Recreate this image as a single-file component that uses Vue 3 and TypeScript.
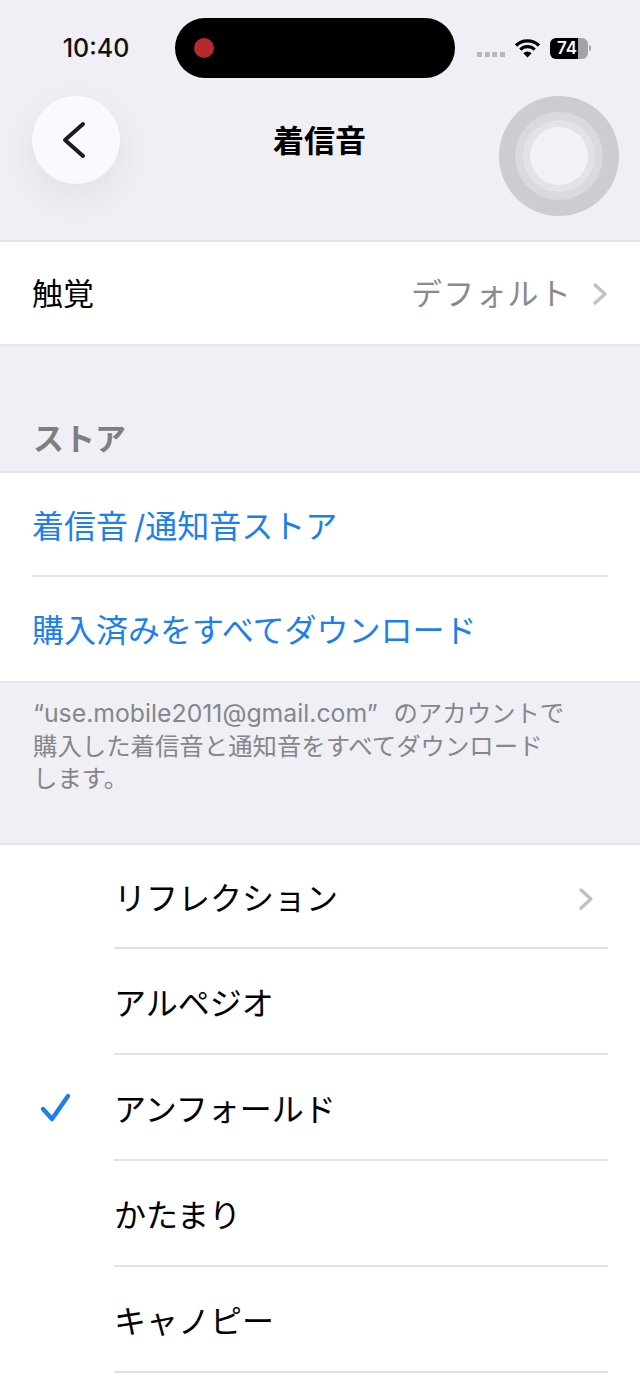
<script setup lang="ts">
const stores = ['着信音\u2009/通知音ストア', '購入済みをすべてダウンロード']

const tones = [
  { name: 'リフレクション', chevron: true, checked: false },
  { name: 'アルペジオ', chevron: false, checked: false },
  { name: 'アンフォールド', chevron: false, checked: true },
  { name: 'かたまり', chevron: false, checked: false },
  { name: 'キャノピー', chevron: false, checked: false },
]
</script>

<template>
  <div class="screen">
    <header class="top">
      <div class="status">
        <span class="time">10:40</span>
        <div class="island"><span class="rec"></span></div>
        <div class="indicators">
          <div class="dots"><i></i><i></i><i></i><i></i></div>
          <svg class="wifi" width="27" height="20" viewBox="0 0 27 20">
            <path d="M2 7.5a16.5 16.5 0 0 1 23 0M6.3 11.6a10.4 10.4 0 0 1 14.4 0" fill="none" stroke="#000" stroke-width="3.2" />
            <path d="M13.5 19.5 9.3 15.2a6 6 0 0 1 8.4 0z" fill="#000" />
          </svg>
          <div class="battery">
            <div class="battery-body"><span>74</span></div>
            <span class="battery-cap"></span>
          </div>
        </div>
      </div>
      <div class="nav">
        <button class="back">
          <svg width="26" height="38" viewBox="0 0 26 38">
            <path d="M22 3 4 19l18 16" fill="none" stroke="#1c1c1e" stroke-width="4" stroke-linecap="round" stroke-linejoin="round" />
          </svg>
        </button>
        <h1 class="title">着信音</h1>
      </div>
    </header>

    <!-- assistive touch floats over the page -->
    <div class="touch"><div class="touch-mid"><div class="touch-inner"><div class="touch-core"></div></div></div></div>

    <section class="group">
      <div class="row haptic">
        <span class="label">触覚</span>
        <span class="value">デフォルト</span>
        <svg class="chev" width="16" height="24" viewBox="0 0 16 24">
          <path d="M3 3l10 9-10 9" fill="none" stroke="#c1c1c4" stroke-width="3.4" stroke-linecap="round" stroke-linejoin="round" />
        </svg>
      </div>
    </section>

    <h2 class="section-title">ストア</h2>
    <section class="group">
      <div v-for="item in stores" :key="item" class="row link-row">
        <span class="link">{{ item }}</span>
      </div>
    </section>
    <p class="note"><span class="mail">“use.mobile2011@gmail.com”</span> のアカウントで<br />購入した着信音と通知音をすべてダウンロード<br />します。</p>

    <section class="group tones">
      <div v-for="tone in tones" :key="tone.name" class="tone">
        <div class="tick">
          <svg v-if="tone.checked" width="34" height="34" viewBox="0 0 34 34">
            <path d="M4 18l9 10L29 5" fill="none" stroke="#1c7fec" stroke-width="4.4" stroke-linecap="round" stroke-linejoin="round" />
          </svg>
        </div>
        <div class="tone-body">
          <span class="tone-name">{{ tone.name }}</span>
          <svg v-if="tone.chevron" class="chev" width="16" height="24" viewBox="0 0 16 24">
            <path d="M3 3l10 9-10 9" fill="none" stroke="#c1c1c4" stroke-width="3.4" stroke-linecap="round" stroke-linejoin="round" />
          </svg>
        </div>
      </div>
    </section>
  </div>
</template>

<style scoped>
.screen {
  position: relative;
  display: flex;
  flex-direction: column;
  width: 640px;
  height: 1387px;
  overflow: hidden;
  background: #efeff5;
  font-family: Inter, "Noto Sans CJK JP", sans-serif;
  color: #000;
}

.top {
  height: 240px;
  flex: none;
  box-sizing: border-box;
  padding-top: 18px;
}

.status {
  display: flex;
  align-items: center;
  height: 60px;
}

.time {
  width: 175px;
  padding-left: 17px;
  box-sizing: border-box;
  text-align: center;
  font-size: 25px;
  font-weight: 500;
  color: #111;
}

.island {
  display: flex;
  align-items: center;
  width: 280px;
  height: 60px;
  border-radius: 30px;
  background: #000;
  padding-left: 19px;
  box-sizing: border-box;
}

.rec {
  width: 20px;
  height: 20px;
  border-radius: 50%;
  background: #b72a2c;
}

.indicators {
  display: flex;
  align-items: center;
  margin-left: 22px;
}

.dots {
  display: flex;
  gap: 2.5px;
  margin-top: 12px;
}

.dots i {
  width: 5px;
  height: 5px;
  background: #b9b9bd;
}

.wifi {
  margin-left: 9px;
}

.battery {
  display: flex;
  align-items: center;
  margin-left: 9px;
}

.battery-body {
  width: 38px;
  height: 21px;
  border-radius: 6px;
  background: linear-gradient(90deg, #000 74%, #a3a3a6 74%);
  color: #fff;
  font-size: 17px;
  font-weight: 600;
  line-height: 21px;
  text-align: center;
}

.battery-body span {
  margin-left: -3px;
}

.battery-cap {
  width: 2px;
  height: 6px;
  margin-left: 1px;
  border-radius: 0 2px 2px 0;
  background: #a3a3a6;
}

.nav {
  display: flex;
  align-items: center;
  height: 88px;
  margin-top: 18px;
  padding-left: 32px;
}

.back {
  display: flex;
  align-items: center;
  justify-content: center;
  width: 88px;
  height: 88px;
  padding: 0 4px 0 0;
  border: none;
  border-radius: 50%;
  background: #f9f9fe;
  box-shadow: 0 12px 40px rgba(0, 0, 0, 0.07);
}

.title {
  margin: 2px 0 0 153px;
  font-size: 31px;
  font-weight: 700;
  line-height: 40px;
}

.touch {
  position: absolute;
  left: 499px;
  top: 96px;
  display: flex;
  align-items: center;
  justify-content: center;
  width: 120px;
  height: 120px;
  border-radius: 50%;
  background: #cdcdd1;
}

.touch-mid {
  display: flex;
  align-items: center;
  justify-content: center;
  width: 88px;
  height: 88px;
  border-radius: 50%;
  background: #dadade;
}

.touch-inner {
  display: flex;
  align-items: center;
  justify-content: center;
  width: 72px;
  height: 72px;
  border-radius: 50%;
  background: #e3e3e7;
}

.touch-core {
  width: 58px;
  height: 58px;
  border-radius: 50%;
  background: #f1f1f6;
}

.group {
  flex: none;
  background: #fff;
  border-top: 2px solid #e5e5e8;
  border-bottom: 2px solid #e5e5e8;
}

.row {
  display: flex;
  align-items: center;
  padding: 0 32px;
}

.haptic {
  height: 102px;
  padding-top: 1px;
  box-sizing: border-box;
}

.label {
  flex: 1;
  font-size: 31px;
  line-height: 40px;
}

.value {
  font-size: 31px;
  line-height: 40px;
  letter-spacing: 1.2px;
  color: #8a8a8e;
}

.chev {
  margin-left: 20px;
}

.section-title {
  flex: none;
  margin: 73px 0 0;
  padding-left: 33px;
  height: 52px;
  font-size: 31px;
  font-weight: 700;
  line-height: 40px;
  color: #7f7f83;
}

.link-row {
  height: 104px;
  padding-top: 3px;
  box-sizing: border-box;
}

.link-row + .link-row {
  position: relative;
}

.link-row + .link-row::before {
  content: "";
  position: absolute;
  left: 32px;
  right: 32px;
  top: -2px;
  height: 2px;
  background: #e1e1e4;
}

.link {
  font-size: 32px;
  line-height: 40px;
  color: #1c7fec;
}

.note {
  flex: none;
  margin: 0;
  height: 160px;
  padding: 14px 32px 0 33px;
  box-sizing: border-box;
  font-size: 24.4px;
  line-height: 32.5px;
  color: #86868b;
}

.mail {
  margin-right: 9px;
  font-size: 24.8px;
}

.tones {
  flex: 1;
  border-bottom: none;
}

.tone {
  display: flex;
  align-items: stretch;
  height: 106px;
}

.tone:first-child {
  height: 104px;
}

.tick {
  display: flex;
  align-items: center;
  justify-content: center;
  width: 114px;
  padding-right: 2px;
  box-sizing: border-box;
}

.tone-body {
  flex: 1;
  display: flex;
  align-items: center;
  margin-right: 32px;
  padding-top: 6px;
  padding-right: 14px;
  border-bottom: 2px solid #e1e1e4;
}

.tone-name {
  flex: 1;
  font-size: 32px;
  line-height: 40px;
}
</style>
